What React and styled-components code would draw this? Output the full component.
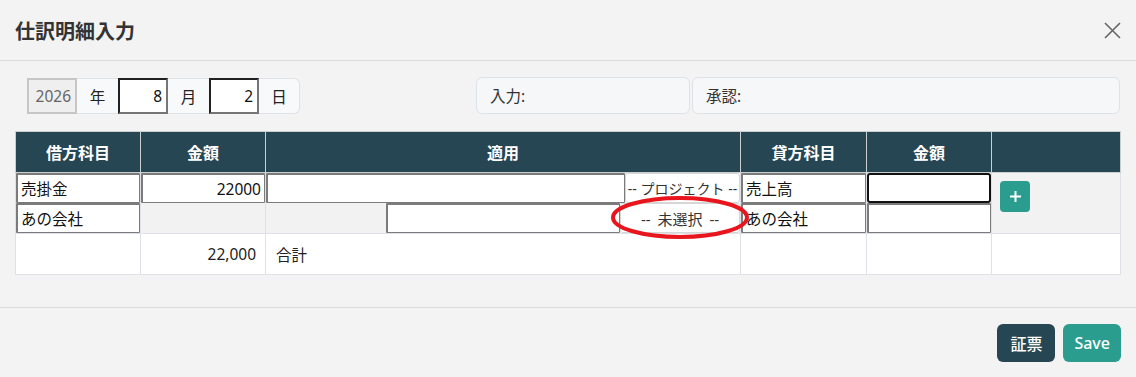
import styled, { createGlobalStyle } from "styled-components";

const GlobalStyle = createGlobalStyle`
  html, body {
    margin: 0;
    background: #f3f3f3;
  }
  body {
    font-family: "Noto Sans", "Noto Sans CJK JP", sans-serif;
    color: #222;
  }
`;

const Modal = styled.div`
  position: relative;
  width: 1136px;
  height: 377px;
  background: #f3f3f3;
  display: flex;
  flex-direction: column;
`;

const Header = styled.div`
  height: 60px;
  padding: 0 15px;
  display: flex;
  align-items: center;
  justify-content: space-between;
  border-bottom: 1px solid #dcdcdc;
`;

const Title = styled.h1`
  margin: 0;
  font-size: 20px;
  font-weight: 700;
  color: #333;
`;

const CloseBtn = styled.button`
  width: 18px;
  height: 18px;
  padding: 0;
  border: none;
  background: none;
  display: flex;
  align-items: center;
  justify-content: center;
`;

const Body = styled.div`
  padding: 17px 16px 0 15px;
  height: 229px;
  border-bottom: 1px solid #dcdcdc;
`;

const TopRow = styled.div`
  display: flex;
  height: 36px;
  padding-left: 12px;
`;

const DateGroup = styled.div`
  display: flex;
  height: 36px;
`;

const YearBox = styled.input`
  width: 50px;
  height: 36px;
  box-sizing: border-box;
  border: 2px solid #c6c6c6;
  background: #efefef;
  color: #666;
  font: inherit;
  font-size: 15.5px;
  text-align: right;
  padding: 0 4px;
`;

const DateInput = styled.input`
  width: 50px;
  height: 36px;
  box-sizing: border-box;
  border: 2px inset #767676;
  background: #fff;
  color: #111;
  font: inherit;
  font-size: 15.5px;
  text-align: right;
  padding: 0 4px;
`;

const Addon = styled.span`
  width: 41px;
  box-sizing: border-box;
  display: flex;
  align-items: center;
  justify-content: center;
  background: #f8f9fa;
  border: 1px solid #dee2e6;
  border-left: none;
  border-right: ${(p) => (p.last ? "1px solid #dee2e6" : "none")};
  border-radius: ${(p) => (p.last ? "0 6px 6px 0" : "0")};
  font-size: 15.5px;
  color: #222;
`;

const InfoBox = styled.div`
  box-sizing: border-box;
  height: 37px;
  margin-top: -1px;
  width: ${(p) => p.w}px;
  flex: ${(p) => (p.grow ? 1 : "none")};
  display: flex;
  align-items: center;
  padding-left: 13px;
  background: #f6f7f8;
  border: 1px solid #dee2e6;
  border-radius: 6px;
  font-size: 15.5px;
  color: #333;
`;

const Spacer = styled.div`
  width: 176px;
`;

const Gap = styled.div`
  width: 2px;
`;

const Table = styled.table`
  margin-top: 17px;
  width: 1105px;
  border-collapse: collapse;
  table-layout: fixed;
  font-size: 15.5px;
`;

const Th = styled.th`
  height: 40px;
  padding: 0;
  background: #264653;
  color: #fff;
  font-weight: 700;
  font-size: 16px;
  border: 1px solid #c9ced1;
`;

const Td = styled.td`
  padding: 0;
  background: #f2f2f2;
  border-left: 1px solid #dee2e6;
  border-right: 1px solid #dee2e6;
  border-top: ${(p) => (p.top ? "1px solid #dee2e6" : "none")};
  border-bottom: ${(p) => (p.bottom ? "1px solid #dee2e6" : "none")};
  vertical-align: ${(p) => p.valign || "middle"};
`;

const SumCell = styled.td`
  height: 40px;
  padding: 0 ${(p) => (p.align === "right" ? "9px" : "10px")};
  background: #fff;
  border: 1px solid #dee2e6;
  text-align: ${(p) => p.align || "left"};
  color: #222;
`;

const Field = styled.input`
  display: block;
  width: 100%;
  flex: 1;
  min-width: 0;
  height: 30px;
  box-sizing: border-box;
  margin: 0;
  padding: 0 3px;
  background: #fff;
  font: inherit;
  font-size: 15.5px;
  color: #111;
  text-align: ${(p) => p.align || "left"};
  border-style: solid;
  border-color: ${(p) => (p.focused ? "#111" : "#7b7b7b")};
  border-width: ${(p) => (p.focused ? "2px" : "2px 1.5px 1.5px 2px")};
  border-radius: ${(p) => (p.focused ? "3px" : "1px")};
  outline: none;
`;

const Split = styled.div`
  display: flex;
  height: 30px;
  padding-left: ${(p) => p.indent || 0}px;
`;

const Pick = styled.div`
  width: ${(p) => p.w}px;
  flex: none;
  height: 30px;
  box-sizing: border-box;
  display: flex;
  align-items: center;
  justify-content: center;
  background: #fff;
  border: 1px solid #d6d6d6;
  border-radius: 3px;
  font-size: ${(p) => p.size || 15}px;
  word-spacing: ${(p) => p.spread || 0}px;
  color: #333;
  white-space: pre;
  overflow: hidden;
`;

const AddBtn = styled.button`
  margin: 8px 0 0 8px;
  width: 30px;
  height: 31px;
  padding: 0;
  border: none;
  border-radius: 4px;
  background: #2a9d8f;
  display: flex;
  align-items: center;
  justify-content: center;
`;

const Footer = styled.div`
  flex: 1;
  display: flex;
  justify-content: flex-end;
  align-items: flex-start;
  gap: 8px;
  padding: 16px 15px 0 0;
`;

const FooterBtn = styled.button`
  height: 38px;
  padding: 0 ${(p) => (p.primary ? "11px" : "13px")};
  border: none;
  border-radius: 6px;
  background: ${(p) => (p.primary ? "#2a9d8f" : "#264653")};
  color: #fff;
  font: inherit;
  font-size: 16px;
  font-weight: 500;
`;

const Annotation = styled.svg`
  position: absolute;
  left: 610px;
  top: 195px;
  pointer-events: none;
`;

export default function App() {
  return (
    <>
      <GlobalStyle />
      <Modal>
        <Header>
          <Title>仕訳明細入力</Title>
          <CloseBtn aria-label="close">
            <svg width="17" height="17" viewBox="0 0 17 17">
              <path d="M1 1L16 16M16 1L1 16" stroke="#666" strokeWidth="1.6" />
            </svg>
          </CloseBtn>
        </Header>

        <Body>
          <TopRow>
            <DateGroup>
              <YearBox value="2026" disabled readOnly />
              <Addon>年</Addon>
              <DateInput value="8" readOnly />
              <Addon>月</Addon>
              <DateInput value="2" readOnly />
              <Addon last>日</Addon>
            </DateGroup>
            <Spacer />
            <InfoBox w={214}>入力:</InfoBox>
            <Gap />
            <InfoBox grow>承認:</InfoBox>
          </TopRow>

          <Table>
            <colgroup>
              <col style={{ width: 125 }} />
              <col style={{ width: 125 }} />
              <col style={{ width: 475 }} />
              <col style={{ width: 126 }} />
              <col style={{ width: 125 }} />
              <col style={{ width: 129 }} />
            </colgroup>
            <thead>
              <tr>
                <Th>借方科目</Th>
                <Th>金額</Th>
                <Th>適用</Th>
                <Th>貸方科目</Th>
                <Th>金額</Th>
                <Th />
              </tr>
            </thead>
            <tbody>
              <tr>
                <Td top><Field value="売掛金" readOnly /></Td>
                <Td top><Field value="22000" align="right" readOnly /></Td>
                <Td top>
                  <Split>
                    <Field value="" readOnly />
                    <Pick w={115} size={14}>-- プロジェクト --</Pick>
                  </Split>
                </Td>
                <Td top><Field value="売上高" readOnly /></Td>
                <Td top><Field value="" focused readOnly /></Td>
                <Td top bottom rowSpan={2} valign="top">
                  <AddBtn aria-label="add">
                    <svg width="13" height="13" viewBox="0 0 13 13">
                      <path d="M6.5 1v11M1 6.5h11" stroke="#fff" strokeWidth="2" />
                    </svg>
                  </AddBtn>
                </Td>
              </tr>
              <tr>
                <Td bottom><Field value="あの会社" readOnly /></Td>
                <Td bottom />
                <Td bottom>
                  <Split indent={120}>
                    <Field value="" readOnly />
                    <Pick w={120} spread={3}>-- 未選択 --</Pick>
                  </Split>
                </Td>
                <Td bottom><Field value="あの会社" readOnly /></Td>
                <Td bottom><Field value="" readOnly /></Td>
              </tr>
              <tr>
                <SumCell />
                <SumCell align="right">22,000</SumCell>
                <SumCell>合計</SumCell>
                <SumCell />
                <SumCell />
                <SumCell />
              </tr>
            </tbody>
          </Table>
        </Body>

        <Footer>
          <FooterBtn>証票</FooterBtn>
          <FooterBtn primary>Save</FooterBtn>
        </Footer>

        <Annotation width="142" height="46" viewBox="0 0 142 46">
          <ellipse cx="70" cy="22.5" rx="67" ry="19.5" fill="none" stroke="#e8151d" strokeWidth="4" />
        </Annotation>
      </Modal>
    </>
  );
}
